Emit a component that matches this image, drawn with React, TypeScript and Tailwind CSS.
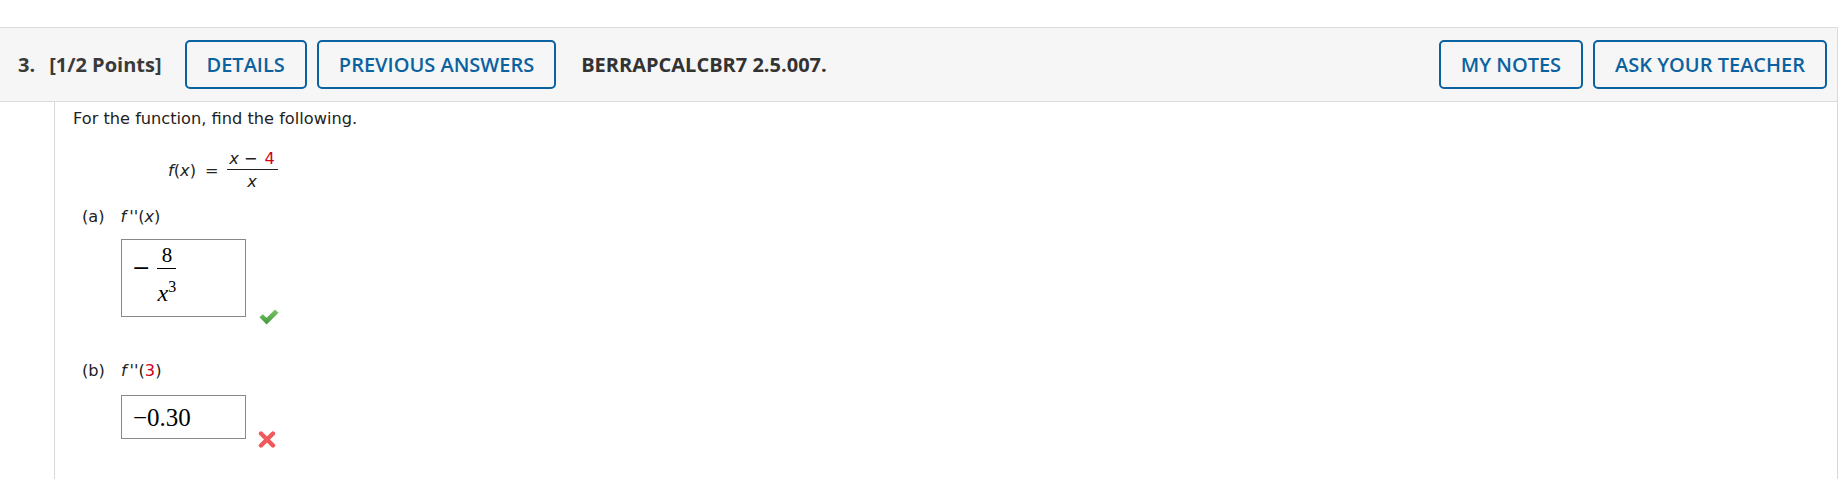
import React from 'react';

const headerFont = { fontFamily: '"Open Sans", "Liberation Sans", sans-serif' };
const mathFont = { fontFamily: '"Liberation Serif", "DejaVu Serif", serif' };

function OutlineButton({ label }: { label: string }) {
  return (
    <button
      type="button"
      className="h-[49px] px-[20px] border-2 border-[#0b62a0] rounded-[5px] text-[#0b62a0] text-[20px] font-semibold leading-none"
    >
      {label}
    </button>
  );
}

function CheckMark() {
  return (
    <svg width="20" height="16" viewBox="0 0 20 16" className="mb-[-8px] ml-[13px] shrink-0">
      <defs>
        <linearGradient id="ok" x1="0" y1="0" x2="0" y2="1">
          <stop offset="0" stopColor="#7cc46a" />
          <stop offset="1" stopColor="#3f9a3a" />
        </linearGradient>
      </defs>
      <path d="M0.5 8.2 L3.8 5.2 L7.6 8.8 L16 0.6 L19.5 3.8 L7.6 15.4 Z" fill="url(#ok)" />
    </svg>
  );
}

function CrossMark() {
  return (
    <svg width="18" height="17" viewBox="0 0 18 17" className="mb-[-9px] ml-[12px] shrink-0">
      <path
        d="M3 2.5 L15 14.5 M15 2.5 L3 14.5"
        stroke="#f0595b"
        strokeWidth="4.4"
        strokeLinecap="round"
      />
    </svg>
  );
}

function SecondDerivative({ arg, red }: { arg: string; red?: boolean }) {
  return (
    <span className="ml-[16px]">
      <span className="italic">f</span>
      <span className="italic ml-[3px]">''</span>
      <span>(</span>
      <span className={red ? 'text-[#d0021b]' : 'italic'}>{arg}</span>
      <span>)</span>
    </span>
  );
}

export default function App() {
  return (
    <div className="w-[1844px] h-[479px] bg-white overflow-hidden pt-[27px]">
      {/* question header */}
      <div
        className="w-[1838px] h-[75px] bg-[#f6f6f6] border-y border-r border-[#dcdcdc] flex items-center pl-[18px] pr-[10px]"
        style={headerFont}
      >
        <span className="text-[20px] font-bold text-[#3a3a3a]">3.</span>
        <span className="ml-[14px] text-[20px] font-bold text-[#3a3a3a]">[1/2 Points]</span>
        <div className="ml-[23px] flex gap-[10px]">
          <OutlineButton label="DETAILS" />
          <OutlineButton label="PREVIOUS ANSWERS" />
        </div>
        <span className="ml-[25px] text-[20px] font-bold text-[#333]">BERRAPCALCBR7 2.5.007.</span>
        <div className="ml-auto flex gap-[10px]">
          <OutlineButton label="MY NOTES" />
          <OutlineButton label="ASK YOUR TEACHER" />
        </div>
      </div>

      {/* question body */}
      <div
        className="ml-[54px] w-[1784px] h-[377px] border-x border-[#d8d8d8] pl-[18px] pt-[5px] text-[#222] text-[16.2px] leading-[24px]"
        style={{ fontFamily: '"DejaVu Sans", Verdana, sans-serif' }}
      >
        <p>For the function, find the following.</p>

        <div className="mt-[19px] ml-[95px] flex items-center">
          <span className="italic">f</span>
          <span>(</span>
          <span className="italic">x</span>
          <span>)</span>
          <span className="ml-[9px]">=</span>
          <div className="ml-[8px] flex flex-col items-center w-[51px]">
            <div className="leading-[18px] pb-[1px]">
              <span className="italic">x</span>
              <span className="ml-[5px]">−</span>
              <span className="ml-[7px] text-[#d0021b]">4</span>
            </div>
            <div className="w-full border-t border-[#222]" />
            <div className="leading-[18px] pt-[3px] italic">x</div>
          </div>
        </div>

        <div className="mt-[14px] ml-[9px] flex">
          <span>(a)</span>
          <SecondDerivative arg="x" />
        </div>

        <div className="mt-[10px] ml-[48px] flex items-end">
          <div
            className="w-[125px] h-[78px] border border-[#888] flex items-start pl-[10px] pt-[4px] text-black"
            style={mathFont}
          >
            <span
              className="text-[22px] leading-[22px] mt-[13px]"
              style={{ fontFamily: '"DejaVu Serif", serif' }}
            >
              −
            </span>
            <div className="ml-[7px] flex flex-col items-center w-[19px]">
              <span className="text-[21px] leading-[22px] pb-[2px]">8</span>
              <div className="w-full border-t border-black" />
              <div className="flex items-start">
                <span className="italic text-[24px] leading-[24px] mt-[12px]">x</span>
                <span className="text-[16px] leading-[16px] mt-[10px]">3</span>
              </div>
            </div>
          </div>
          <CheckMark />
        </div>

        <div className="mt-[42px] ml-[9px] flex">
          <span>(b)</span>
          <SecondDerivative arg="3" red />
        </div>

        <div className="mt-[12px] ml-[48px] flex items-end">
          <div
            className="w-[125px] h-[44px] border border-[#888] flex items-center pl-[11px] text-black text-[25px] leading-none"
            style={mathFont}
          >
            −0.30
          </div>
          <CrossMark />
        </div>
      </div>
    </div>
  );
}
